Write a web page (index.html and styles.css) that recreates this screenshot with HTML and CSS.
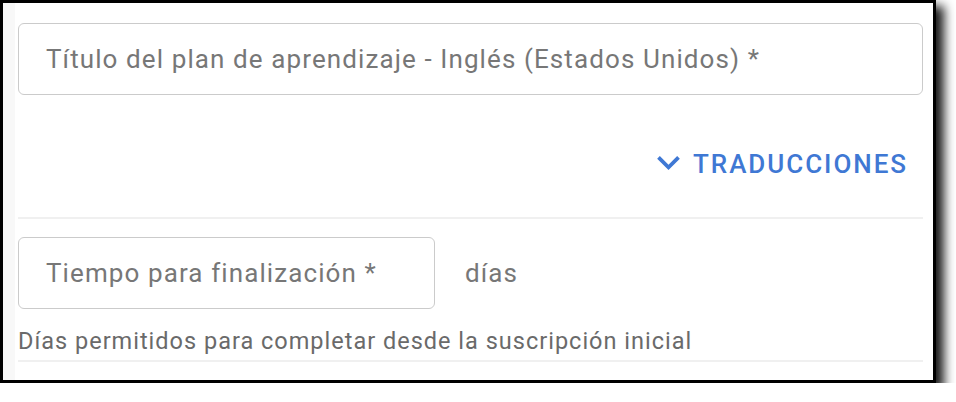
FILE: index.html
```html
<!DOCTYPE html>
<html lang="es">
<head>
<meta charset="utf-8">
<title>Plan de aprendizaje</title>
<link rel="stylesheet" href="styles.css">
</head>
<body>
<div class="frame">
  <div class="strip"></div>
  <div class="content">
    <div class="field field-wide">
      <span class="field-label">Título del plan de aprendizaje - Inglés (Estados Unidos) *</span>
    </div>
    <div class="trans-row">
      <button class="trans-btn" type="button">
        <svg class="chev" width="23" height="14" viewBox="6 8.59 12 7.41" aria-hidden="true"><path d="M16.59 8.59L12 13.17 7.41 8.59 6 10l6 6 6-6z" fill="currentColor"/></svg>
        <span>TRADUCCIONES</span>
      </button>
    </div>
    <div class="divider"></div>
    <div class="time-row">
      <div class="field field-narrow">
        <span class="field-label">Tiempo para finalización *</span>
      </div>
      <span class="unit">días</span>
    </div>
    <div class="helper">Días permitidos para completar desde la suscripción inicial</div>
    <div class="divider divider-bottom"></div>
  </div>
</div>
</body>
</html>
```
FILE: styles.css
```css
html, body {
  margin: 0;
  padding: 0;
  background: #ffffff;
}
body {
  font-family: Roboto, "Liberation Sans", sans-serif;
}
.frame {
  box-sizing: border-box;
  width: 936px;
  height: 383px;
  border: 3px solid #000;
  background: #fff;
  display: flex;
  box-shadow: 7px 7px 10px 1px rgba(0, 0, 0, 0.9);
}
.strip {
  width: 12px;
  flex: none;
  background: #f8f8f8;
}
.content {
  flex: 1;
  padding: 20px 10px 0 3px;
  display: flex;
  flex-direction: column;
}
.field {
  box-sizing: border-box;
  height: 72px;
  border: 1px solid #cbcbcb;
  border-radius: 6px;
  display: flex;
  align-items: center;
  padding-left: 27px;
}
.field-narrow {
  width: 417px;
}
.field-label {
  font-size: 26px;
  letter-spacing: 1.1px;
  line-height: 30px;
  color: #777777;
  white-space: nowrap;
}
.trans-row {
  height: 122px;
  box-sizing: border-box;
  padding: 16px 15px 0 0;
  display: flex;
  align-items: center;
  justify-content: flex-end;
}
.trans-btn {
  display: flex;
  align-items: center;
  gap: 13px;
  border: 0;
  background: transparent;
  padding: 0;
  color: #3f78d4;
  font-family: Roboto, "Liberation Sans", sans-serif;
  font-size: 26px;
  font-weight: 500;
  letter-spacing: 1.95px;
  line-height: 30px;
}
.chev {
  display: block;
  margin-top: -3px;
}
.divider {
  height: 2px;
  background: #f0f0f0;
}
.time-row {
  margin-top: 18px;
  display: flex;
  align-items: center;
}
.unit {
  margin-left: 30px;
  font-size: 26px;
  letter-spacing: 1.1px;
  line-height: 30px;
  color: #777777;
}
.helper {
  margin-top: 18px;
  font-size: 23.5px;
  letter-spacing: 1px;
  line-height: 28px;
  color: #6a6a6a;
  white-space: nowrap;
}
.divider-bottom {
  margin-top: 5px;
}
```
